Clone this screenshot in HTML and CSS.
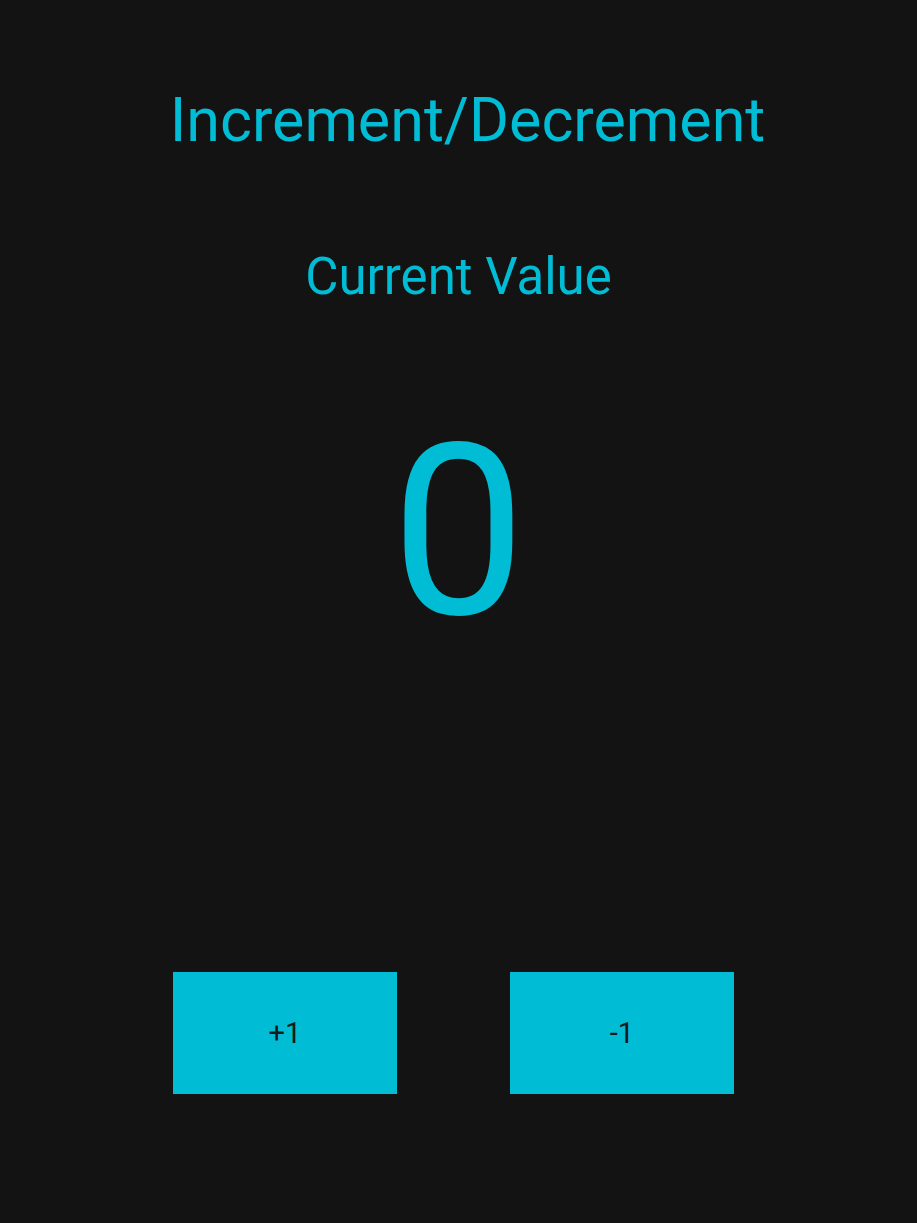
FILE: index.html
```html
<!DOCTYPE html>
<html lang="en">
<head>
<meta charset="utf-8">
<title>Increment/Decrement</title>
<link rel="stylesheet" href="styles.css">
</head>
<body>
<main class="app">
  <h1 class="title">Increment/Decrement</h1>
  <h2 class="label">Current Value</h2>
  <div class="value">0</div>
  <div class="actions">
    <button class="btn" type="button">+1</button>
    <button class="btn" type="button">-1</button>
  </div>
</main>
</body>
</html>
```
FILE: styles.css
```css
html, body {
  margin: 0;
  padding: 0;
  background: #131313;
}
body {
  width: 917px;
  height: 1223px;
  font-family: Roboto, "Noto Sans", sans-serif;
  color: #00bcd4;
}
.app {
  display: flex;
  flex-direction: column;
  align-items: center;
  padding-top: 90px;
}
.title {
  margin: 0;
  font-size: 61px;
  line-height: 61px;
  font-weight: 400;
  padding-left: 18px;
}
.label {
  margin: 100px 0 0;
  font-size: 51px;
  line-height: 51px;
  font-weight: 400;
}
.value {
  margin-top: 110px;
  font-size: 240px;
  line-height: 240px;
}
.actions {
  margin-top: 320px;
  display: flex;
  gap: 113px;
  margin-right: 10px;
}
.btn {
  width: 224px;
  height: 122px;
  border: none;
  border-radius: 0;
  background: #00bcd4;
  color: #14191b;
  font-family: Roboto, "Noto Sans", sans-serif;
  font-size: 29px;
  padding: 0;
}
```
